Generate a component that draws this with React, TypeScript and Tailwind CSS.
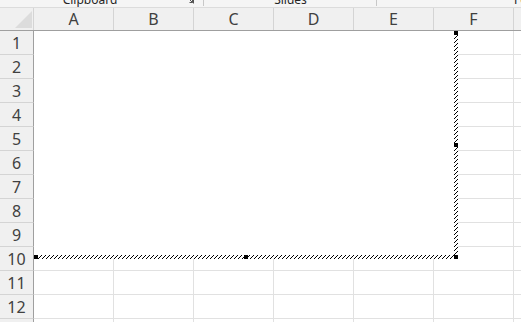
import React from "react";

const cols = ["A", "B", "C", "D", "E", "F"];
const rows = [1, 2, 3, 4, 5, 6, 7, 8, 9, 10, 11, 12, 13];

function Hatch({ id }: { id: string }) {
  return (
    <svg width="100%" height="100%" className="block" shapeRendering="crispEdges">
      <defs>
        <pattern id={id} width="4" height="4" patternUnits="userSpaceOnUse">
          <rect width="4" height="4" fill="#fff" />
          <rect x="3" y="0" width="1" height="1" fill="#000" />
          <rect x="2" y="1" width="1" height="1" fill="#000" />
          <rect x="1" y="2" width="1" height="1" fill="#000" />
          <rect x="0" y="3" width="1" height="1" fill="#000" />
        </pattern>
      </defs>
      <rect width="100%" height="100%" fill={`url(#${id})`} />
    </svg>
  );
}

export default function App() {
  return (
    <div
      className="relative w-[521px] h-[322px] overflow-hidden bg-white text-[#404040]"
      style={{ fontFamily: '"Segoe UI", "Noto Sans", "Open Sans", sans-serif' }}
    >
      {/* ribbon group labels (cut off) */}
      <div className="flex h-[8px] overflow-hidden border-b border-[#dcdcdc] bg-[#f5f5f5] text-[12px] leading-[12px] text-[#262626]">
        <div className="relative flex w-[204px] shrink-0 justify-center pr-[24px]">
          <span className="mt-[-6px] whitespace-nowrap">Clipboard</span>
          <svg className="absolute left-[186px] top-[-4px]" width="8" height="8" viewBox="0 0 8 8">
            <path d="M0.5 0.5h7v7" fill="none" stroke="#555" strokeWidth="1" />
            <path d="M2 2l4.5 4.5M6.5 3.5v3h-3" fill="none" stroke="#555" strokeWidth="1" />
          </svg>
          <div className="absolute right-0 top-0 h-[6px] w-px bg-[#c8c8c8]" />
        </div>
        <div className="relative flex w-[173px] shrink-0 justify-center">
          <span className="mt-[-6px] whitespace-nowrap">Slides</span>
          <div className="absolute right-0 top-0 h-[6px] w-px bg-[#c8c8c8]" />
        </div>
        <div className="flex shrink-0 pl-[137px]">
          <span className="mt-[-6px] whitespace-nowrap">Font</span>
        </div>
      </div>

      {/* column headers */}
      <div className="flex h-[23px] border-b border-[#9f9f9f] bg-[#f0f0f0]">
        <div className="relative w-[34px] shrink-0 border-r border-[#d4d4d4]">
          <svg className="absolute left-[15px] top-[3px]" width="17" height="17" viewBox="0 0 17 17">
            <polygon points="17,0 17,17 0,17" fill="#dcdcdc" />
          </svg>
        </div>
        {cols.map((c) => (
          <div
            key={c}
            className="flex w-[80px] shrink-0 items-center justify-center border-r border-[#d4d4d4] text-[16px] leading-none"
          >
            {c}
          </div>
        ))}
        <div className="w-[80px] shrink-0" />
      </div>

      {/* rows */}
      {rows.map((r) => (
        <div key={r} className="flex h-[24px]">
          <div className="flex w-[34px] shrink-0 items-center justify-center border-b border-r border-b-[#d4d4d4] border-r-[#9f9f9f] bg-[#f0f0f0] text-[16px] leading-none">
            {r}
          </div>
          {cols.map((c) => (
            <div key={c} className="w-[80px] shrink-0 border-b border-r border-[#e1e1e1]" />
          ))}
          <div className="w-[80px] shrink-0 border-b border-r border-[#e1e1e1]" />
        </div>
      ))}

      {/* selected chart object */}
      <div className="absolute left-[34px] top-[31px] h-[228px] w-[424px] bg-white">
        <div className="absolute right-0 top-0 h-full w-[4px]">
          <Hatch id="hr" />
        </div>
        <div className="absolute bottom-0 left-0 h-[4px] w-full">
          <Hatch id="hb" />
        </div>
        <div className="absolute right-0 top-0 h-[4px] w-[4px] bg-black" />
        <div className="absolute right-0 top-[112px] h-[4px] w-[4px] bg-black" />
        <div className="absolute bottom-0 right-0 h-[4px] w-[4px] bg-black" />
        <div className="absolute bottom-0 left-[210px] h-[4px] w-[4px] bg-black" />
        <div className="absolute bottom-0 left-0 h-[4px] w-[4px] bg-black" />
      </div>
    </div>
  );
}
